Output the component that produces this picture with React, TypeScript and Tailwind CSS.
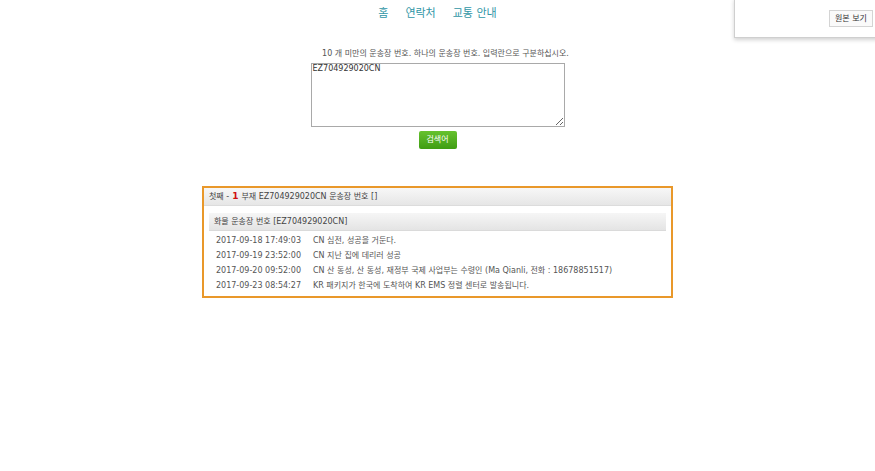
import React from 'react';

const font = { fontFamily: '"DejaVu Sans", "Noto Sans CJK KR", sans-serif' };

const rows = [
  { time: '2017-09-18 17:49:03', text: 'CN 심전, 성공을 거둔다.' },
  { time: '2017-09-19 23:52:00', text: 'CN 지난 집에 데리러 성공' },
  { time: '2017-09-20 09:52:00', text: 'CN 산 동성, 산 동성, 재정부 국제 사업부는 수령인 (Ma Qianli, 전화 : 18678851517)' },
  { time: '2017-09-23 08:54:27', text: 'KR 패키지가 한국에 도착하여 KR EMS 정렬 센터로 발송됩니다.' },
];

const App = () => {
  return (
    <div className="relative min-h-[471px] w-full bg-white text-[#444]" style={font}>
      {/* translate popup */}
      <div className="absolute right-[-4px] top-[-2px] h-[40px] w-[145px] border border-[#cfcfcf] bg-white shadow-[0_2px_4px_rgba(0,0,0,0.18)]">
        <div className="absolute left-[94px] top-[11px] flex h-[17px] w-[44px] items-center justify-center border border-[#d4d4d4] bg-[#fafafa] text-[8px] text-[#333]">
          원본 보기
        </div>
      </div>

      <div className="flex flex-col items-center">
        <nav className="mt-[7px] flex h-[15px] items-center gap-[17px] text-[11px] text-[#3096a6]">
          <span>홈</span>
          <span>연락처</span>
          <span>교통 안내</span>
        </nav>

        <p className="ml-[16px] mt-[25px] text-[8px] leading-[14px] text-[#555]">
          10 개 미만의 운송장 번호. 하나의 운송장 번호. 입력란으로 구분하십시오.
        </p>
        <textarea
          className="mt-[2px] h-[64px] w-[254px] border border-[#a9a9a9] px-[1px] py-0 text-[8px] leading-[10px] text-[#333] outline-none"
          style={font}
          defaultValue="EZ704929020CN"
        />
        <button className="mt-[4px] flex h-[18px] w-[38px] items-center justify-center rounded-[2px] bg-gradient-to-b from-[#66c22e] to-[#3f9d12] text-[8px] text-white">
          검색어
        </button>

        <div className="mt-[37px] w-[471px] border-2 border-[#e9982a] pb-[3px]">
          <div className="flex h-[18px] items-center border-b border-[#dcdcdc] bg-gradient-to-b from-[#f7f7f7] to-[#e6e6e6] px-[5px] text-[8px] text-[#444]">
            첫째 - <span className="mx-[3px] text-[9px] font-bold text-[#d01010]">1</span> 부재 EZ704929020CN 운송장 번호 []
          </div>
          <div className="px-[5px] pt-[7px]">
            <div className="flex h-[18px] items-center border-b border-[#dadada] bg-gradient-to-b from-[#f6f6f6] to-[#e4e4e4] px-[5px] text-[8px] text-[#444]">
              화물 운송장 번호 [EZ704929020CN]
            </div>
            <div className="mt-[2px] flex flex-col">
              {rows.map((r, key) => (
                <div key={key} className="flex h-[15px] items-center text-[8px] text-[#555]">
                  <span className="w-[104px] pl-[7px]">{r.time}</span>
                  <span>{r.text}</span>
                </div>
              ))}
            </div>
          </div>
        </div>
      </div>
    </div>
  );
};

export default App;
